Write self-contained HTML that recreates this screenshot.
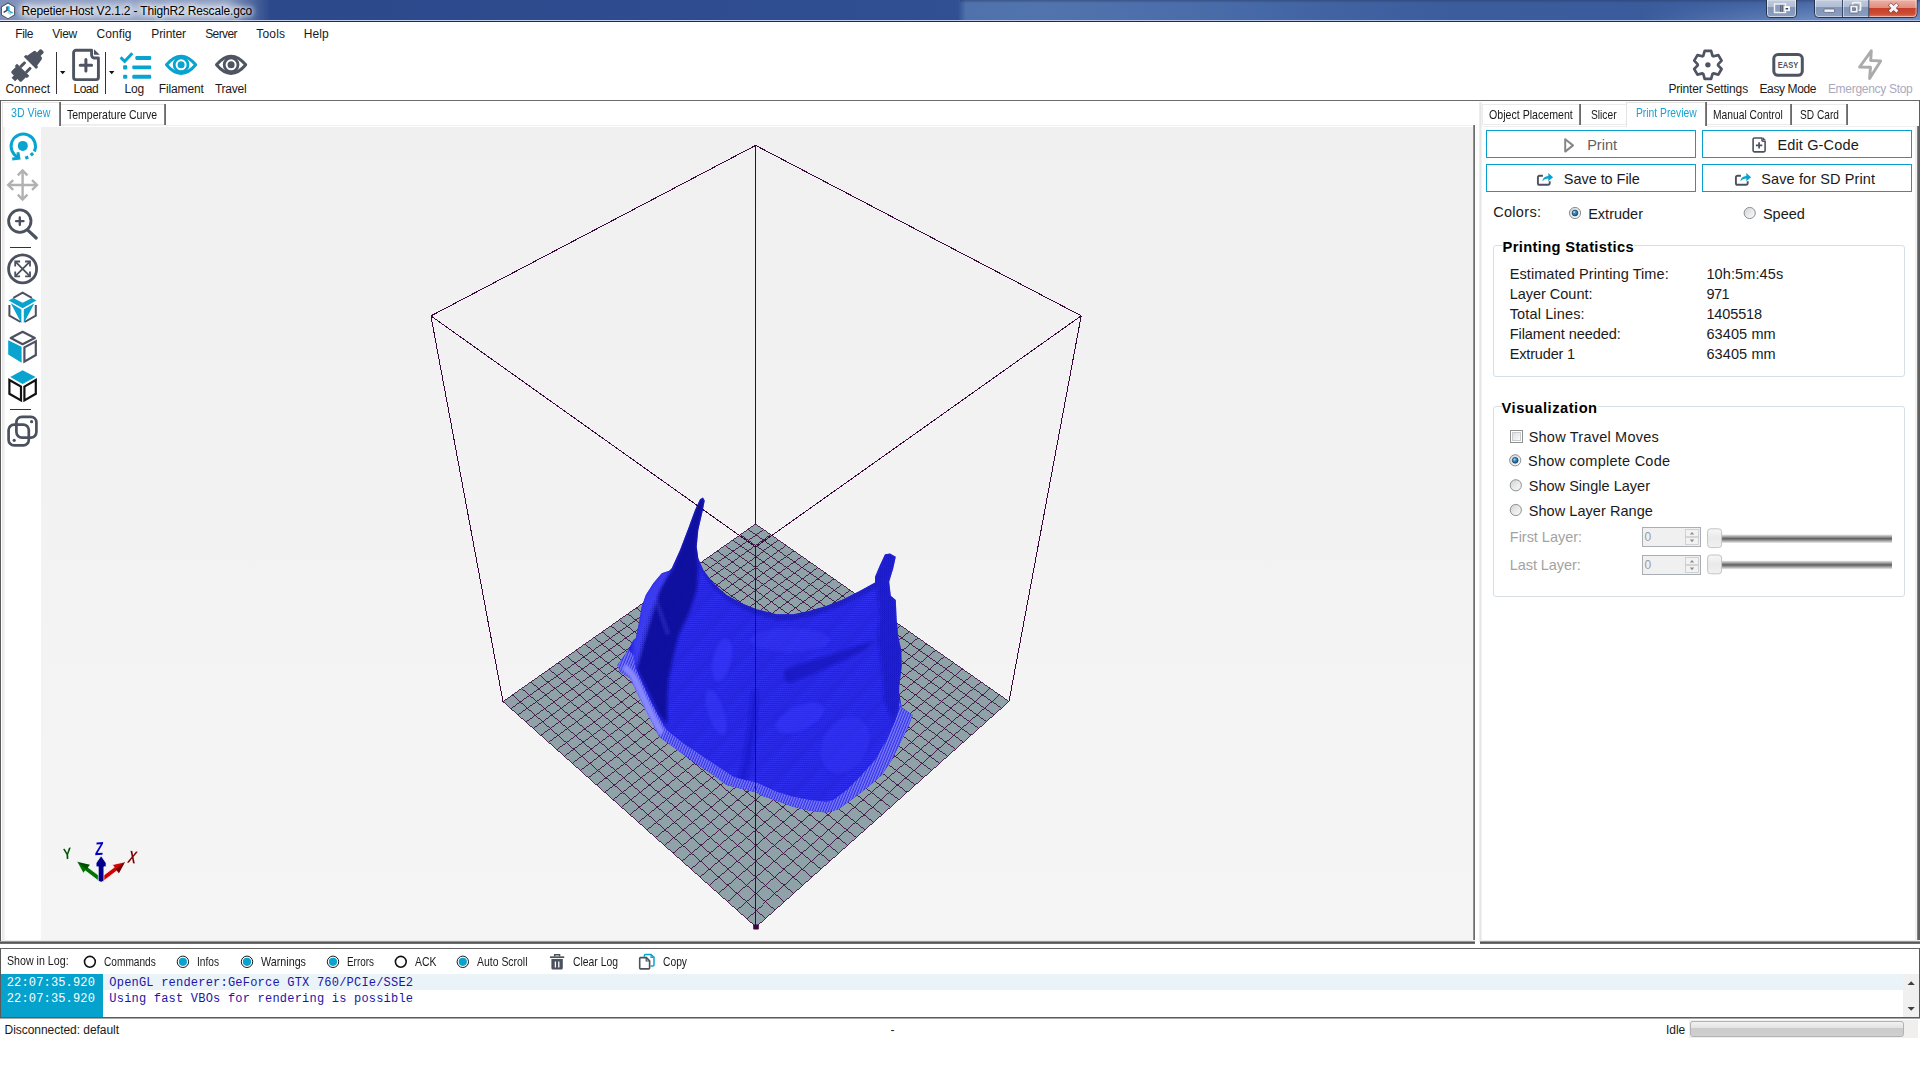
<!DOCTYPE html>
<html lang="en"><head><meta charset="utf-8"><title>Repetier-Host V2.1.2 - ThighR2 Rescale.gco</title>
<style>
html,body{margin:0;padding:0;background:#fff;}
body{width:1920px;height:1080px;overflow:hidden;font-family:"Liberation Sans",sans-serif;}
#app{position:relative;width:1920px;height:1080px;overflow:hidden;background:#fff;}
#app div,#app svg{position:absolute;box-sizing:border-box;}
.t{white-space:pre;transform-origin:0 0;}
.glow{text-shadow:0 0 4px rgba(255,255,255,.9),0 0 6px rgba(255,255,255,.85),0 0 8px rgba(255,255,255,.7),0 0 11px rgba(255,255,255,.5);}
.ln{background:#696969;}

</style></head>
<body>
<div id="app">
<!-- ===== title bar ===== -->
<div style="left:0;top:0;width:1920px;height:20px;background:linear-gradient(90deg,#2e4a8c 0,#2c498c 300px,#2e4c8f 700px,#305093 958px,#4f72ad 966px,#5174ae 1040px,#4b6eab 1180px,#4163a2 1330px,#3b5d9d 1450px,#395a9b 1760px,#4566a4 1920px);"></div>
<div style="left:960px;top:0;width:960px;height:3px;background:linear-gradient(180deg,rgba(40,60,105,.55),rgba(40,60,105,0));"></div>
<div style="left:0;top:0;width:300px;height:20px;background:linear-gradient(90deg,rgba(235,240,250,.43) 0,rgba(235,240,250,.43) 226px,rgba(235,240,250,.2) 250px,rgba(235,240,250,0) 270px);"></div>
<div style="left:20px;top:2px;width:218px;height:17px;border-radius:9px;background:rgba(255,255,255,.4);filter:blur(5px);"></div>
<div style="left:0;top:20px;width:1920px;height:1px;background:linear-gradient(90deg,#dfe6f3 0,#c3cfe8 300px,#b3c3e3 1920px);"></div>
<div style="left:0;top:21px;width:1920px;height:1px;background:#1f2b4a;"></div>
<div style="left:1640px;top:0;width:280px;height:20px;background:linear-gradient(90deg,rgba(150,180,225,0),rgba(150,180,225,.5) 60%,rgba(150,180,225,.55));-webkit-mask-image:linear-gradient(180deg,rgba(0,0,0,.15),#000);mask-image:linear-gradient(180deg,rgba(0,0,0,.15),#000);"></div>
<!-- app icon -->
<svg style="left:0;top:2px" width="17" height="18" viewBox="0 0 17 18">
<polygon points="8,1 14.6,4.9 14.6,12.9 8,16.9 1.4,12.9 1.4,4.9" fill="#fff" stroke="#4a5468" stroke-width="1.1" stroke-linejoin="round"/>
<path d="M8.6,4.2 V9" stroke="#23b5dd" stroke-width="2" fill="none"/>
<path d="M7,4.4 V8.4 L3.6,10.4" stroke="#3c4252" stroke-width="1.5" fill="none"/>
<path d="M8.6,9 L12.6,11" stroke="#23b5dd" stroke-width="1.7" fill="none"/>
<path d="M7.6,10.4 L11.2,12.4" stroke="#c9c9c9" stroke-width="1.6" fill="none"/>
</svg>
<!-- caption buttons -->
<svg style="left:1760px;top:0" width="160" height="22" viewBox="0 0 160 22">
<defs>
<linearGradient id="gb" x1="0" y1="0" x2="0" y2="1"><stop offset="0" stop-color="#c3cde0"/><stop offset=".45" stop-color="#aebbd3"/><stop offset=".46" stop-color="#8095b9"/><stop offset="1" stop-color="#8d9fc0"/></linearGradient>
<linearGradient id="gr" x1="0" y1="0" x2="0" y2="1"><stop offset="0" stop-color="#eeb0a4"/><stop offset=".45" stop-color="#e08f80"/><stop offset=".46" stop-color="#c2402a"/><stop offset=".8" stop-color="#cf4a30"/><stop offset="1" stop-color="#d9765e"/></linearGradient>
</defs>
<!-- extra -->
<path d="M6.5,-1 H36.5 V14 a3.5,3.5 0 0 1 -3.5,3.5 H10 a3.5,3.5 0 0 1 -3.5,-3.5 Z" fill="url(#gb)" stroke="#26344f" stroke-width="1"/>
<path d="M7.5,0 H35.5 V14 a2.5,2.5 0 0 1 -2.5,2.5 H10 a2.5,2.5 0 0 1 -2.5,-2.5 Z" fill="none" stroke="rgba(255,255,255,.55)" stroke-width="1"/>
<rect x="14.5" y="4" width="11" height="8.5" fill="#8b9dbf" stroke="#f4f4f4" stroke-width="1.4"/>
<path d="M20.7,5 V12 M22.3,5 V12" stroke="#444c60" stroke-width=".8"/>
<rect x="24.3" y="6.6" width="5.2" height="4" fill="#fff" stroke="#f4f4f4" stroke-width="1"/>
<rect x="25.6" y="8" width="2.6" height="1.5" fill="#3a4358"/>
<!-- min max close -->
<path d="M54.5,-1 H157 V13.5 a4,4 0 0 1 -4,4 H58.5 a4,4 0 0 1 -4,-4 Z" fill="url(#gb)" stroke="#26344f" stroke-width="1"/>
<path d="M109,0 H156.5 V13.5 a3.5,3.5 0 0 1 -3.5,3.5 H109 Z" fill="url(#gr)"/>
<path d="M55.5,0 H156 V13.5 a3,3 0 0 1 -3,3 H58.5 a3,3 0 0 1 -3,-3 Z" fill="none" stroke="rgba(255,255,255,.5)" stroke-width="1"/>
<path d="M82.5,0 V17 M108.8,0 V17" stroke="#3a4866" stroke-width="1"/>
<path d="M83.5,0 V16.5" stroke="rgba(255,255,255,.45)" stroke-width="1"/>
<rect x="64" y="9" width="10.5" height="3.4" rx=".6" fill="#f4f4f4" stroke="#596581" stroke-width=".8"/>
<rect x="92.6" y="2.6" width="8" height="7.6" rx=".8" fill="#a9b6cf" stroke="#f4f4f4" stroke-width="1.6"/>
<rect x="89.9" y="5.2" width="8.2" height="7.8" rx=".8" fill="#f4f4f4" stroke="#4d5974" stroke-width=".7"/>
<rect x="92.6" y="7.8" width="3" height="2.7" fill="#7c8fb3" stroke="#4d5974" stroke-width=".6"/>
<path d="M129.4,4 L137.8,12 M137.8,4 L129.4,12" stroke="#6a3434" stroke-width="4.4" stroke-linecap="butt" opacity=".75"/>
<path d="M129.8,4.4 L137.4,11.6 M137.4,4.4 L129.8,11.6" stroke="#f6f6f6" stroke-width="2.9" stroke-linecap="butt"/>
</svg>

<!-- ===== toolbar ===== -->
<div class="ln" style="left:0;top:100px;width:1920px;height:1px;background:#6b6b6b;"></div>
<svg style="left:0;top:44px" width="260" height="56" viewBox="0 44 260 56">
<!-- connect -->
<g transform="translate(28.3,64.6) rotate(-45) scale(.9)" fill="#4f5463">
<path d="M-23.5,-2.8 h3.6 v-3.4 q0,-1.8 1.8,-1.8 h6.4 v-1.6 h3.6 v19.2 h-3.6 v-1.6 h-6.4 q-1.8,0 -1.8,-1.8 v-3.4 h-3.6 Z"/>
<rect x="-8.4" y="-6" width="8.2" height="3.3" rx="1.2"/><rect x="-8.4" y="2.7" width="8.2" height="3.3" rx="1.2"/>
<path d="M2.6,-9.6 h3.4 v1.8 l8.6,1.4 q1.8,.4 1.8,2.2 v1.4 h4.4 q1.4,0 1.4,1.4 v2.8 q0,1.4 -1.4,1.4 h-4.4 v1.4 q0,1.8 -1.8,2.2 l-8.6,1.4 v1.8 h-3.4 Z"/>
</g>
<rect x="56" y="52" width="1" height="42" fill="#333"/>
<path d="M60,71 h5.4 l-2.7,3.2 Z" fill="#111"/>
<!-- load -->
<path d="M91.6,50.3 H76 a2.4,2.4 0 0 0 -2.4,2.4 V77.2 a2.4,2.4 0 0 0 2.4,2.4 H96 a2.4,2.4 0 0 0 2.4,-2.4 V58 H94.6 a3,3 0 0 1 -3,-3 Z" fill="none" stroke="#4f5463" stroke-width="2.9" stroke-linejoin="round"/>
<path d="M94,49.2 L99.8,54.8 H94 Z" fill="#4f5463"/>
<path d="M80.2,65.2 H91.6 M85.9,59.4 V71" stroke="#4f5463" stroke-width="3" stroke-linecap="round" fill="none"/>
<rect x="105" y="52" width="1" height="42" fill="#333"/>
<path d="M109,71 h5.4 l-2.7,3.2 Z" fill="#111"/>
<!-- log -->
<path d="M120.6,57.4 L124.7,61.3 L132.3,53.3" fill="none" stroke="#08a4cf" stroke-width="3"/>
<rect x="135.4" y="56" width="15.8" height="3.9" rx="1.2" fill="#08a4cf"/>
<rect x="132.3" y="65.4" width="18.9" height="3.9" rx="1.2" fill="#08a4cf"/>
<rect x="132.3" y="74.8" width="18.9" height="3.9" rx="1.2" fill="#08a4cf"/>
<rect x="123.1" y="65.3" width="4.2" height="4.1" rx="1.2" fill="#08a4cf"/>
<rect x="123.1" y="74.7" width="4.2" height="4.1" rx="1.2" fill="#08a4cf"/>
<!-- filament eye -->
<g transform="translate(181.1,64.8)">
<path d="M-14.6,0 Q-7.5,-8.6 0,-8.6 Q7.5,-8.6 14.6,0 Q7.5,8.6 0,8.6 Q-7.5,8.6 -14.6,0 Z" fill="#fff" stroke="#08a4cf" stroke-width="3" stroke-linejoin="round"/>
<circle r="6.9" fill="#fff" stroke="#08a4cf" stroke-width="2.8"/>
<circle r="3.5" fill="#08a4cf"/>
</g>
<!-- travel eye -->
<g transform="translate(231.1,64.8)">
<path d="M-14.6,0 Q-7.5,-8.6 0,-8.6 Q7.5,-8.6 14.6,0 Q7.5,8.6 0,8.6 Q-7.5,8.6 -14.6,0 Z" fill="#fff" stroke="#4f5463" stroke-width="3" stroke-linejoin="round"/>
<circle r="6.9" fill="#fff" stroke="#4f5463" stroke-width="2.8"/>
<circle r="3.5" fill="#4f5463"/>
</g>
</svg>
<svg style="left:1660px;top:44px" width="260" height="56" viewBox="0 0 260 56">
<path d="M43.27,11.76 L44.68,6.92 L51.12,6.92 L52.53,11.76 L53.46,12.30 L58.36,11.10 L61.58,16.67 L58.09,20.32 L58.09,21.38 L61.58,25.03 L58.36,30.60 L53.46,29.40 L52.53,29.94 L51.12,34.78 L44.68,34.78 L43.27,29.94 L42.34,29.40 L37.44,30.60 L34.22,25.03 L37.71,21.38 L37.71,20.32 L34.22,16.67 L37.44,11.10 L42.34,12.30 Z" fill="none" stroke="#4f5463" stroke-width="2.7" stroke-linejoin="round"/>
<circle cx="47.9" cy="20.85" r="2.7" fill="#4f5463"/>
<rect x="113.8" y="10.6" width="28.5" height="20.7" rx="4.2" fill="#fff" stroke="#4f5463" stroke-width="3"/>
<text x="128.05" y="23.9" font-family="Liberation Sans, sans-serif" font-weight="bold" font-size="8.3" fill="#4f5463" text-anchor="middle" textLength="20.4" lengthAdjust="spacingAndGlyphs">EASY</text>
<path d="M211.3,6.8 L199.6,23 L210.5,23.3 L209.6,34.6 L220.7,16.9 L210.7,16.5 Z" fill="none" stroke="#ababab" stroke-width="2.9" stroke-linejoin="round"/>
</svg>

<!-- ===== left panel frame, tabs ===== -->
<div style="left:0;top:100px;width:1px;height:843px;background:#5a5a5a;"></div>
<div style="left:2px;top:127px;width:3px;height:813px;background:linear-gradient(90deg,#e6e6e6,#f6f6f6);"></div>
<!-- tab 3D View -->
<div style="left:2px;top:102px;width:59px;height:25px;background:#fff;border-left:1px solid #e3e3e3;border-top:1px solid #e3e3e3;"></div>
<div style="left:59px;top:102px;width:2px;height:24px;background:linear-gradient(90deg,#8a8a8a,#606060);"></div>
<!-- tab Temperature Curve -->
<div style="left:61px;top:104px;width:104px;height:21px;background:#fff;border-top:1px solid #e6e6e6;border-bottom:1px solid #ececec;"></div>
<div style="left:164px;top:104px;width:2px;height:21px;background:linear-gradient(90deg,#8a8a8a,#606060);"></div>
<div style="left:61px;top:125px;width:1412px;height:1px;background:#f1f1f1;"></div>
<!-- 3D view frame -->
<div style="left:1473px;top:125px;width:2px;height:818px;background:linear-gradient(90deg,#a0a0a0,#5c5c5c);"></div>
<div style="left:1px;top:940px;width:1474px;height:1px;background:#ececec;"></div>
<div style="left:0;top:941px;width:1475px;height:1px;background:#9a9a9a;"></div>
<div style="left:0;top:942px;width:1475px;height:1px;background:#565656;"></div>
<div style="left:0;top:943px;width:1475px;height:1px;background:#6e6e6e;"></div>
<!-- left tool icons -->
<svg style="left:0;top:127px" width="41" height="330" viewBox="0 127 41 330">
<!-- rotate -->
<path d="M34.3,151.5 A12.2,12.2 0 1 0 18.8,157.6" fill="none" stroke="#08a4cf" stroke-width="3"/>
<path d="M17.9,152.2 L18.9,158.2 L12.2,158.9" fill="none" stroke="#08a4cf" stroke-width="3" stroke-linejoin="miter"/>
<circle cx="22.8" cy="145.9" r="5" fill="#08a4cf"/>
<rect x="-1.6" y="-1.6" width="3.2" height="3.2" fill="#08a4cf" transform="translate(26.8,157.6) rotate(-20)"/>
<rect x="-1.6" y="-1.6" width="3.2" height="3.2" fill="#08a4cf" transform="translate(31.9,154.2) rotate(-40)"/>
<!-- move -->
<g fill="none" stroke="#b1b1b1" stroke-width="2.4">
<path d="M22.6,170.6 V199.4 M8.6,185 H36.6"/>
<path d="M17.8,175.4 L22.6,170.4 L27.4,175.4 M17.8,194.6 L22.6,199.6 L27.4,194.6 M13.2,180.2 L8.2,185 L13.2,189.8 M32,180.2 L37,185 L32,189.8"/>
</g>
<!-- zoom -->
<circle cx="19.8" cy="221.1" r="11.2" fill="none" stroke="#4c515f" stroke-width="2.8"/>
<path d="M27.8,230.2 L36.2,238" stroke="#4c515f" stroke-width="3.2" stroke-linecap="round"/>
<path d="M16.1,221.1 H23.5 M19.8,217.4 V224.8" stroke="#4c515f" stroke-width="2.4" stroke-linecap="round"/>
<rect x="10" y="247" width="21" height="1" fill="#333"/>
<!-- fit -->
<circle cx="22.6" cy="268.9" r="14" fill="none" stroke="#4c515f" stroke-width="2.8"/>
<g fill="none" stroke="#4c515f" stroke-width="1.8">
<path d="M15.6,261.9 L29.6,275.9 M29.6,261.9 L15.6,275.9"/>
<path d="M15.2,266.4 V261.5 H20.1 M25.1,261.5 H30 V266.4 M30,271.4 V276.3 H25.1 M20.1,276.3 H15.2 V271.4"/>
</g>
<!-- cube iso -->
<path d="M8.6,300.6 L13.2,298 L22.6,302.8 L32,298 L36.4,300.6 L22.6,308.2 Z" fill="#08a4cf"/>
<path d="M10.8,303.2 L21.4,309.4 V323.2 Z M34.4,303.2 L23.8,309.4 V323.2 Z" fill="#08a4cf"/>
<path d="M13.4,297.8 L22.6,292.6 L31.8,297.8" fill="none" stroke="#4c515f" stroke-width="2"/>
<path d="M9.4,305 V315.6 L20.6,322 M35.8,305 V315.6 L24.6,322" fill="none" stroke="#4c515f" stroke-width="2"/>
<!-- cube left -->
<path d="M22.6,331.8 L34.8,338 L22.6,344.2 L10.8,338 Z" fill="none" stroke="#4c515f" stroke-width="2.3" stroke-linejoin="round"/>
<path d="M8.2,340.2 L21.6,346.8 V362.8 L8.2,354.6 Z" fill="#08a4cf"/>
<path d="M24.4,347.4 L35.8,341.4 V355 L24.4,361.6 Z" fill="none" stroke="#4c515f" stroke-width="2.2"/>
<!-- cube top -->
<path d="M22.6,370.2 L35.6,377 L22.6,384 L10.2,377 Z" fill="#08a4cf"/>
<path d="M9.4,380 L21,386.6 V400.4 L9.4,393.8 Z M24.4,386.6 L35.8,380 V393.8 L24.4,400.4 Z" fill="none" stroke="#111" stroke-width="2.2"/>
<rect x="10" y="409" width="21" height="1" fill="#333"/>
<!-- overlapping squares -->
<rect x="16.4" y="416.8" width="20" height="20.8" rx="5.5" fill="none" stroke="#4c515f" stroke-width="2.7"/>
<rect x="8.6" y="424.6" width="20.2" height="20.8" rx="5.5" fill="none" stroke="#4c515f" stroke-width="2.7"/>
<circle cx="31.6" cy="421.7" r="1.6" fill="#4c515f"/><circle cx="14.2" cy="440.3" r="1.6" fill="#4c515f"/>
</svg>

<!-- ===== 3D view ===== -->
<svg style="left:41px;top:127px" width="1432" height="813" viewBox="41 127 1432 813">
<defs>
<linearGradient id="bg3d" x1="0" y1="0" x2="0" y2="1"><stop offset="0" stop-color="#f0f0f0"/><stop offset="1" stop-color="#f5f5f5"/></linearGradient>
<pattern id="moire" width="2" height="2" patternUnits="userSpaceOnUse"><rect width="2" height="1" fill="#4a4aff" opacity=".6"/></pattern>
<pattern id="moire2" width="2.13" height="2.13" patternUnits="userSpaceOnUse" patternTransform="rotate(4)"><rect width="2.13" height="1.06" fill="#1010c0" opacity=".6"/></pattern>
<pattern id="moire3" width="2.2" height="2.2" patternUnits="userSpaceOnUse" patternTransform="rotate(-77)"><rect width="2.2" height="1.1" fill="#4646ff" opacity=".5"/></pattern>
<pattern id="stripes" width="2.5" height="2.5" patternUnits="userSpaceOnUse" patternTransform="rotate(22)"><rect width="1.25" height="2.5" fill="#9494ff"/></pattern>
<pattern id="dots" width="2" height="2" patternUnits="userSpaceOnUse"><rect width="1" height="1" fill="#0a0a9a" opacity=".55"/></pattern>
<radialGradient id="shade" cx=".55" cy=".45" r=".6"><stop offset="0" stop-color="#2a2aff" stop-opacity=".5"/><stop offset="1" stop-color="#1414c8" stop-opacity=".25"/></radialGradient>
<filter id="b2" x="-20%" y="-20%" width="140%" height="140%"><feGaussianBlur stdDeviation="1.6"/></filter>
<filter id="b1" x="-20%" y="-20%" width="140%" height="140%"><feGaussianBlur stdDeviation=".9"/></filter>
</defs>
<rect x="41" y="127" width="1432" height="813" fill="url(#bg3d)"/>
<path d="M755.6,145.4L430.9,315.9 M755.6,145.4L1081.2,315.8 M430.9,315.9L503.0,701.6 M1081.2,315.8L1009.0,701.5 M755.6,145.4L755.56,524.0" stroke="#3a073c" stroke-width="1" fill="none" shape-rendering="crispEdges"/>
<polygon points="755.6,524.0 1009.0,701.5 756.0,927.0 503.0,701.6" fill="#8fa2a8"/>
<path d="M755.6,524.0L503.0,701.6 M755.6,524.0L1009.0,701.5 M763.1,529.3L510.5,708.2 M748.0,529.3L1001.5,708.2 M770.8,534.6L518.0,714.9 M740.4,534.7L994.0,714.9 M778.4,540.0L525.5,721.7 M732.7,540.1L986.4,721.6 M786.2,545.4L533.2,728.5 M725.0,545.5L978.8,728.4 M794.0,550.9L540.9,735.3 M717.2,551.0L971.1,735.3 M801.8,556.4L548.6,742.3 M709.4,556.5L963.3,742.2 M809.7,561.9L556.5,749.2 M701.5,562.0L955.5,749.2 M817.7,567.5L564.3,756.3 M693.6,567.6L947.6,756.3 M825.7,573.1L572.3,763.3 M685.6,573.2L939.6,763.4 M833.8,578.8L580.3,770.5 M677.5,578.9L931.6,770.5 M841.9,584.5L588.4,777.7 M669.4,584.6L923.5,777.7 M850.1,590.2L596.6,785.0 M661.2,590.4L915.3,785.0 M858.4,596.0L604.8,792.3 M653.0,596.1L907.1,792.3 M866.7,601.9L613.1,799.7 M644.7,602.0L898.8,799.7 M875.1,607.7L621.4,807.1 M636.3,607.9L890.4,807.2 M883.6,613.6L629.9,814.6 M627.9,613.8L882.0,814.7 M892.1,619.6L638.4,822.2 M619.4,619.8L873.5,822.3 M900.7,625.6L647.0,829.9 M610.8,625.8L864.9,829.9 M909.3,631.7L655.6,837.6 M602.2,631.8L856.3,837.6 M918.0,637.8L664.4,845.4 M593.5,637.9L847.5,845.4 M926.8,643.9L673.2,853.2 M584.8,644.1L838.7,853.3 M935.7,650.1L682.0,861.1 M576.0,650.3L829.9,861.2 M944.6,656.4L691.0,869.1 M567.1,656.5L820.9,869.1 M953.6,662.7L700.0,877.1 M558.2,662.8L811.9,877.2 M962.6,669.0L709.2,885.3 M549.1,669.2L802.8,885.3 M971.8,675.4L718.4,893.5 M540.1,675.5L793.6,893.5 M981.0,681.9L727.6,901.7 M530.9,682.0L784.3,901.8 M990.2,688.4L737.0,910.1 M521.7,688.5L775.0,910.1 M999.6,694.9L746.5,918.5 M512.4,695.0L765.5,918.5 M1009.0,701.5L756.0,927.0 M503.0,701.6L756.0,927.0" stroke="#3a073c" stroke-width=".84" fill="none" shape-rendering="crispEdges"/>
<!-- printed object -->
<clipPath id="mclip"><polygon points="703.0,497.5 704.7,500.8 702.5,511.7 698.3,530.0 696.7,546.7 698.3,558.3 703.3,570.0 713.3,583.3 726.7,595.0 741.7,603.3 756.7,609.2 776.7,614.2 793.3,614.2 810.0,610.8 826.7,605.8 843.3,599.2 860.0,590.8 875.0,582.5 875.0,576.7 880.0,565.0 885.0,554.2 890.0,553.6 895.8,556.7 893.3,568.3 889.2,581.7 890.8,595.8 895.8,600.0 896.7,620.0 898.3,636.7 901.3,650.0 901.7,666.7 899.2,686.7 899.2,693.3 901.7,707.5 912.5,715.0 908.3,726.7 900.0,743.3 891.7,760.0 881.7,775.0 868.3,786.7 853.3,798.3 838.3,809.2 826.7,812.5 810.0,810.8 793.3,806.7 776.7,800.8 760.0,795.0 756.7,792.5 743.3,789.2 726.7,785.0 713.3,775.0 693.3,761.7 675.0,748.3 659.2,736.7 655.0,728.3 646.7,711.7 638.3,695.0 630.0,678.3 620.0,671.7 617.5,665.0 628.3,650.0 633.3,640.0 635.8,638.3 639.2,621.7 641.7,606.7 645.8,595.0 653.3,583.3 661.7,573.3 669.2,570.8 671.7,568.3 680.0,550.0 688.3,528.3 695.0,510.0 700.0,499.2"/></clipPath>
<g>
<polygon points="703.0,497.5 704.7,500.8 702.5,511.7 698.3,530.0 696.7,546.7 698.3,558.3 703.3,570.0 713.3,583.3 726.7,595.0 741.7,603.3 756.7,609.2 776.7,614.2 793.3,614.2 810.0,610.8 826.7,605.8 843.3,599.2 860.0,590.8 875.0,582.5 875.0,576.7 880.0,565.0 885.0,554.2 890.0,553.6 895.8,556.7 893.3,568.3 889.2,581.7 890.8,595.8 895.8,600.0 896.7,620.0 898.3,636.7 901.3,650.0 901.7,666.7 899.2,686.7 899.2,693.3 901.7,707.5 912.5,715.0 908.3,726.7 900.0,743.3 891.7,760.0 881.7,775.0 868.3,786.7 853.3,798.3 838.3,809.2 826.7,812.5 810.0,810.8 793.3,806.7 776.7,800.8 760.0,795.0 756.7,792.5 743.3,789.2 726.7,785.0 713.3,775.0 693.3,761.7 675.0,748.3 659.2,736.7 655.0,728.3 646.7,711.7 638.3,695.0 630.0,678.3 620.0,671.7 617.5,665.0 628.3,650.0 633.3,640.0 635.8,638.3 639.2,621.7 641.7,606.7 645.8,595.0 653.3,583.3 661.7,573.3 669.2,570.8 671.7,568.3 680.0,550.0 688.3,528.3 695.0,510.0 700.0,499.2" fill="#2222e6"/>
<g clip-path="url(#mclip)">
<polygon points="703.0,497.5 704.7,500.8 702.5,511.7 698.3,530.0 696.7,546.7 698.3,558.3 703.3,570.0 713.3,583.3 726.7,595.0 741.7,603.3 756.7,609.2 776.7,614.2 793.3,614.2 810.0,610.8 826.7,605.8 843.3,599.2 860.0,590.8 875.0,582.5 875.0,576.7 880.0,565.0 885.0,554.2 890.0,553.6 895.8,556.7 893.3,568.3 889.2,581.7 890.8,595.8 895.8,600.0 896.7,620.0 898.3,636.7 901.3,650.0 901.7,666.7 899.2,686.7 899.2,693.3 901.7,707.5 912.5,715.0 908.3,726.7 900.0,743.3 891.7,760.0 881.7,775.0 868.3,786.7 853.3,798.3 838.3,809.2 826.7,812.5 810.0,810.8 793.3,806.7 776.7,800.8 760.0,795.0 756.7,792.5 743.3,789.2 726.7,785.0 713.3,775.0 693.3,761.7 675.0,748.3 659.2,736.7 655.0,728.3 646.7,711.7 638.3,695.0 630.0,678.3 620.0,671.7 617.5,665.0 628.3,650.0 633.3,640.0 635.8,638.3 639.2,621.7 641.7,606.7 645.8,595.0 653.3,583.3 661.7,573.3 669.2,570.8 671.7,568.3 680.0,550.0 688.3,528.3 695.0,510.0 700.0,499.2" fill="url(#moire)" opacity=".5"/>
<polygon points="703.0,497.5 704.7,500.8 702.5,511.7 698.3,530.0 696.7,546.7 698.3,558.3 703.3,570.0 713.3,583.3 726.7,595.0 741.7,603.3 756.7,609.2 776.7,614.2 793.3,614.2 810.0,610.8 826.7,605.8 843.3,599.2 860.0,590.8 875.0,582.5 875.0,576.7 880.0,565.0 885.0,554.2 890.0,553.6 895.8,556.7 893.3,568.3 889.2,581.7 890.8,595.8 895.8,600.0 896.7,620.0 898.3,636.7 901.3,650.0 901.7,666.7 899.2,686.7 899.2,693.3 901.7,707.5 912.5,715.0 908.3,726.7 900.0,743.3 891.7,760.0 881.7,775.0 868.3,786.7 853.3,798.3 838.3,809.2 826.7,812.5 810.0,810.8 793.3,806.7 776.7,800.8 760.0,795.0 756.7,792.5 743.3,789.2 726.7,785.0 713.3,775.0 693.3,761.7 675.0,748.3 659.2,736.7 655.0,728.3 646.7,711.7 638.3,695.0 630.0,678.3 620.0,671.7 617.5,665.0 628.3,650.0 633.3,640.0 635.8,638.3 639.2,621.7 641.7,606.7 645.8,595.0 653.3,583.3 661.7,573.3 669.2,570.8 671.7,568.3 680.0,550.0 688.3,528.3 695.0,510.0 700.0,499.2" fill="url(#moire2)" opacity=".5"/>
<polygon points="703.0,497.5 704.7,500.8 702.5,511.7 698.3,530.0 696.7,546.7 698.3,558.3 703.3,570.0 713.3,583.3 726.7,595.0 741.7,603.3 756.7,609.2 776.7,614.2 793.3,614.2 810.0,610.8 826.7,605.8 843.3,599.2 860.0,590.8 875.0,582.5 875.0,576.7 880.0,565.0 885.0,554.2 890.0,553.6 895.8,556.7 893.3,568.3 889.2,581.7 890.8,595.8 895.8,600.0 896.7,620.0 898.3,636.7 901.3,650.0 901.7,666.7 899.2,686.7 899.2,693.3 901.7,707.5 912.5,715.0 908.3,726.7 900.0,743.3 891.7,760.0 881.7,775.0 868.3,786.7 853.3,798.3 838.3,809.2 826.7,812.5 810.0,810.8 793.3,806.7 776.7,800.8 760.0,795.0 756.7,792.5 743.3,789.2 726.7,785.0 713.3,775.0 693.3,761.7 675.0,748.3 659.2,736.7 655.0,728.3 646.7,711.7 638.3,695.0 630.0,678.3 620.0,671.7 617.5,665.0 628.3,650.0 633.3,640.0 635.8,638.3 639.2,621.7 641.7,606.7 645.8,595.0 653.3,583.3 661.7,573.3 669.2,570.8 671.7,568.3 680.0,550.0 688.3,528.3 695.0,510.0 700.0,499.2" fill="url(#moire3)" opacity=".3"/>
<g filter="url(#b2)">
<polygon points="673.0,569.0 680.0,550.0 688.3,528.3 695.0,510.0 700.0,499.2 703.0,497.5 704.7,500.8 702.5,511.7 698.3,530.0 696.7,546.7 698.1,568.9 696.7,589.6 689.3,611.9 678.9,634.1 673.0,656.3 668.5,678.5 667.0,700.7 667.0,724.0 659.6,715.6 649.3,693.3 638.9,672.6 636.7,663.7 641.9,634.0 652.2,604.4 659.6,589.6" fill="#12129a" opacity=".92"/>
<polygon points="875.0,582.5 875.0,576.7 880.0,565.0 885.0,554.2 890.0,553.6 895.8,556.7 893.3,568.3 889.2,581.7 890.8,595.8 895.8,600.0 896.7,620.0 898.3,636.7 901.3,650.0 901.7,666.7 899.2,686.7 899.2,708.0 893.0,722.0 884.0,700.0 882.0,670.0 878.0,640.0 880.0,610.0" fill="#1c1cd0" opacity=".5"/>
<polygon points="633.3,640.0 635.8,638.3 639.2,621.7 641.7,606.7 645.8,595.0 653.3,583.3 661.7,573.3 669.2,570.8 660.0,590.0 652.0,615.0 643.0,645.0 637.0,668.0 633.5,655.0" fill="#3a3af0"/>
<path d="M655,597 L668,634" stroke="#4a4aee" stroke-width="3" opacity=".4"/>
<polygon points="752.0,690.0 748.0,730.0 742.0,765.0 738.0,780.0 746.0,781.0 752.0,760.0 757.0,720.0 758.0,690.0" fill="#1a1ac8" opacity=".55"/>
<ellipse cx="722" cy="660" rx="9" ry="22" fill="#3a3aff" opacity=".55" transform="rotate(12 722 660)"/>
<ellipse cx="800" cy="718" rx="26" ry="12" fill="#3a3aff" opacity=".45" transform="rotate(-25 800 718)"/>
<ellipse cx="716" cy="712" rx="8" ry="24" fill="#3c3cff" opacity=".4" transform="rotate(-18 716 712)"/>
<ellipse cx="845" cy="745" rx="22" ry="30" fill="#3636fa" opacity=".4" transform="rotate(30 845 745)"/>
<ellipse cx="790" cy="640" rx="40" ry="12" fill="#3838fc" opacity=".35"/>
</g>
<g filter="url(#b1)">
<polygon points="785.0,670.0 800.0,664.0 830.0,655.0 856.0,646.0 874.0,641.0 866.0,649.0 845.0,660.0 815.0,673.0 790.0,683.0 784.0,680.0" fill="#1616b4" opacity=".6"/>
<polygon points="696.7,546.7 698.3,558.3 703.3,570.0 713.3,583.3 726.7,595.0 741.7,603.3 756.7,609.2 776.7,614.2 793.3,614.2 810.0,610.8 826.7,605.8 843.3,599.2 860.0,590.8 875.0,582.5 874.5,588.0 859.5,596.3 842.8,604.7 826.2,611.3 809.5,616.3 792.8,619.7 776.2,619.7 758.2,614.7 743.2,608.8 728.2,600.5 714.8,588.8 704.8,575.5 699.8,563.8 698.2,552.2" fill="#1a1ac4" opacity=".7"/>
</g>
<polygon points="673.0,569.0 680.0,550.0 688.3,528.3 695.0,510.0 700.0,499.2 703.0,497.5 704.7,500.8 702.5,511.7 698.3,530.0 696.7,546.7 698.1,568.9 696.7,589.6 689.3,611.9 678.9,634.1 673.0,656.3 668.5,678.5 667.0,700.7 667.0,724.0 659.6,715.6 649.3,693.3 638.9,672.6 636.7,663.7 641.9,634.0 652.2,604.4 659.6,589.6" fill="url(#dots)" opacity=".7"/>
<polygon points="875.0,582.5 875.0,576.7 880.0,565.0 885.0,554.2 890.0,553.6 895.8,556.7 893.3,568.3 889.2,581.7 890.8,595.8 895.8,600.0 896.7,620.0 898.3,636.7 901.3,650.0 901.7,666.7 899.2,686.7 899.2,708.0 893.0,722.0 884.0,700.0 882.0,670.0 878.0,640.0 880.0,610.0" fill="url(#dots)" opacity=".55"/>
<polygon points="696.7,546.7 698.3,558.3 703.3,570.0 713.3,583.3 726.7,595.0 741.7,603.3 756.7,609.2 776.7,614.2 793.3,614.2 810.0,610.8 826.7,605.8 843.3,599.2 860.0,590.8 875.0,582.5 874.5,588.0 859.5,596.3 842.8,604.7 826.2,611.3 809.5,616.3 792.8,619.7 776.2,619.7 758.2,614.7 743.2,608.8 728.2,600.5 714.8,588.8 704.8,575.5 699.8,563.8 698.2,552.2" fill="url(#dots)" opacity=".6"/>
</g>
<polygon points="901.7,707.5 912.5,715.0 908.3,726.7 900.0,743.3 891.7,760.0 881.7,775.0 868.3,786.7 853.3,798.3 838.3,809.2 826.7,812.5 810.0,810.8 793.3,806.7 776.7,800.8 760.0,795.0 756.7,792.5 743.3,789.2 726.7,785.0 713.3,775.0 693.3,761.7 675.0,748.3 659.2,736.7 655.0,728.3 646.7,711.7 638.3,695.0 630.0,678.3 620.0,671.7 617.5,665.0 628.3,650.0 633.5,655.0 635.8,668.3 641.7,681.7 651.7,703.3 663.3,725.0 666.7,730.0 683.3,743.3 703.3,756.7 723.3,770.0 733.3,776.7 745.0,780.0 756.7,782.5 776.7,791.7 793.3,796.7 810.0,800.0 826.7,801.7 833.3,800.0 846.7,790.0 860.0,776.7 875.0,760.0 886.7,740.0 895.0,721.7 899.2,708.3 899.2,700.0" fill="#3232e6"/>
<polygon points="901.7,707.5 912.5,715.0 908.3,726.7 900.0,743.3 891.7,760.0 881.7,775.0 868.3,786.7 853.3,798.3 838.3,809.2 826.7,812.5 810.0,810.8 793.3,806.7 776.7,800.8 760.0,795.0 756.7,792.5 743.3,789.2 726.7,785.0 713.3,775.0 693.3,761.7 675.0,748.3 659.2,736.7 655.0,728.3 646.7,711.7 638.3,695.0 630.0,678.3 620.0,671.7 617.5,665.0 628.3,650.0 633.5,655.0 635.8,668.3 641.7,681.7 651.7,703.3 663.3,725.0 666.7,730.0 683.3,743.3 703.3,756.7 723.3,770.0 733.3,776.7 745.0,780.0 756.7,782.5 776.7,791.7 793.3,796.7 810.0,800.0 826.7,801.7 833.3,800.0 846.7,790.0 860.0,776.7 875.0,760.0 886.7,740.0 895.0,721.7 899.2,708.3 899.2,700.0" fill="url(#stripes)" opacity=".8"/>
<polygon points="622.0,669.0 630.0,677.0 638.0,694.0 646.0,711.0 655.0,728.0 660.0,736.0 664.0,731.0 655.0,714.0 646.0,696.0 640.0,682.0 634.0,672.0 626.0,664.0" fill="#8888ff" filter="url(#b1)"/>
</g>
<path d="M755.6,547.0L756.0,927.0 M430.9,315.9L755.6,547.0 M1081.2,315.8L755.6,547.0" stroke="#3a073c" stroke-width="1" fill="none" shape-rendering="crispEdges"/>
<rect x="753.2" y="924.5" width="5.6" height="5" rx=".8" fill="#3f0340"/>
<!-- axis gizmo -->
<g>
<polygon points="101.9,877.8 87.9,867.3 89.8,864.7 77.0,861.8 83.3,873.3 85.3,870.8 99.3,881.4" fill="#007400" stroke="#fdfdfd" stroke-width=".7"/>
<polygon points="86.6,869.0 89.8,864.7 77.0,861.8" fill="#004e00"/>
<polygon points="102.9,881.4 116.9,870.8 118.9,873.3 125.2,861.8 112.4,864.7 114.3,867.3 100.3,877.8" fill="#d40000" stroke="#fdfdfd" stroke-width=".7"/>
<polygon points="115.6,869.0 118.9,873.3 125.2,861.8" fill="#740000"/>
<path d="M98.3,881 V866.8 H96.1 V863 L101.1,855.8 L106.1,863 V866.8 H103.9 V881 L101.1,882.2 Z" fill="#00008c" stroke="#fdfdfd" stroke-width=".7"/>
<text transform="translate(64.2,859.8) rotate(-12) scale(.78,1)" font-family="Liberation Sans, sans-serif" font-weight="bold" font-style="italic" font-size="15.5" fill="#005400" stroke="#fdfdfd" stroke-width=".6" paint-order="stroke">Y</text>
<text transform="translate(95.4,855.2) rotate(-4) scale(.72,1)" font-family="Liberation Sans, sans-serif" font-weight="bold" font-style="italic" font-size="18.5" fill="#0000c4" stroke="#fdfdfd" stroke-width=".6" paint-order="stroke">Z</text>
<text transform="translate(127.6,862.4) rotate(8) scale(.7,1)" font-family="Liberation Sans, sans-serif" font-weight="bold" font-style="italic" font-size="17.5" fill="#7c0000" stroke="#fdfdfd" stroke-width=".6" paint-order="stroke">X</text>
</g>
</svg>

<!-- ===== right panel ===== -->
<div style="left:1479px;top:102px;width:3px;height:840px;background:linear-gradient(90deg,#f1f1f1,#e6e6e6 50%,#f6f6f6);"></div>
<div style="left:1915px;top:126px;width:2px;height:815px;background:#f1f1f1;"></div>
<div style="left:1917px;top:126px;width:3px;height:818px;background:linear-gradient(90deg,#9a9a9a,#606060 45%,#606060);"></div>
<div style="left:1480px;top:940px;width:1437px;height:1px;background:#ececec;"></div>
<div style="left:1480px;top:941px;width:440px;height:1px;background:#9a9a9a;"></div>
<div style="left:1480px;top:942px;width:440px;height:1px;background:#565656;"></div>
<div style="left:1480px;top:943px;width:440px;height:1px;background:#6e6e6e;"></div>
<div style="left:1919px;top:100px;width:1px;height:27px;background:#5e5e5e;"></div>
<!-- tabs -->
<div style="left:1482px;top:104px;width:98px;height:21px;background:#fff;border:1px solid #ebebeb;border-right:none;"></div>
<div style="left:1579px;top:104px;width:2px;height:21px;background:linear-gradient(90deg,#8a8a8a,#606060);"></div>
<div style="left:1581px;top:104px;width:45px;height:21px;background:#fff;border-top:1px solid #ebebeb;border-bottom:1px solid #ebebeb;"></div>
<div style="left:1626px;top:102px;width:80px;height:25px;background:#fff;border-left:1px solid #e3e3e3;border-top:1px solid #e3e3e3;"></div>
<div style="left:1705px;top:102px;width:2px;height:24px;background:linear-gradient(90deg,#8a8a8a,#606060);"></div>
<div style="left:1707px;top:104px;width:84px;height:21px;background:#fff;border-top:1px solid #ebebeb;border-bottom:1px solid #ebebeb;"></div>
<div style="left:1790px;top:104px;width:2px;height:21px;background:linear-gradient(90deg,#8a8a8a,#606060);"></div>
<div style="left:1792px;top:104px;width:55px;height:21px;background:#fff;border-top:1px solid #ebebeb;border-bottom:1px solid #ebebeb;"></div>
<div style="left:1846px;top:104px;width:2px;height:21px;background:linear-gradient(90deg,#8a8a8a,#606060);"></div>
<div style="left:1482px;top:126px;width:144px;height:1px;background:#f0f0f0;"></div>
<div style="left:1707px;top:126px;width:210px;height:1px;background:#f0f0f0;"></div>
<!-- buttons -->
<div style="left:1486px;top:130px;width:210px;height:28px;border:1px solid #0a9fcf;background:#fff;"></div>
<div style="left:1702px;top:130px;width:210px;height:28px;border:1px solid #0a9fcf;background:#fff;"></div>
<div style="left:1486px;top:164px;width:210px;height:28px;border:1px solid #0a9fcf;background:#fff;"></div>
<div style="left:1702px;top:164px;width:210px;height:28px;border:1px solid #0a9fcf;background:#fff;"></div>
<!-- group boxes -->
<div style="left:1493px;top:245px;width:412px;height:132px;border:1px solid #d5dfe5;border-radius:3px;"></div>
<div style="left:1493px;top:406px;width:412px;height:191px;border:1px solid #d5dfe5;border-radius:3px;"></div>
<svg style="left:1480px;top:127px" width="436" height="480" viewBox="1480 127 436 480">
<defs>
<linearGradient id="rg" x1="0" y1="0" x2="1" y2="1"><stop offset="0" stop-color="#cfd3d6"/><stop offset=".6" stop-color="#ecedee"/><stop offset="1" stop-color="#fbfbfb"/></linearGradient>
<radialGradient id="rd" cx=".4" cy=".35" r=".7"><stop offset="0" stop-color="#4fb3e8"/><stop offset="1" stop-color="#0d4f86"/></radialGradient>
<linearGradient id="trk" x1="0" y1="0" x2="0" y2="1"><stop offset="0" stop-color="#ededed"/><stop offset=".25" stop-color="#a6a6a6"/><stop offset=".5" stop-color="#5e5e5e"/><stop offset=".75" stop-color="#a6a6a6"/><stop offset="1" stop-color="#ededed"/></linearGradient>
<linearGradient id="thumb" x1="0" y1="0" x2="0" y2="1"><stop offset="0" stop-color="#f7f7f7"/><stop offset=".5" stop-color="#e9e9e9"/><stop offset="1" stop-color="#f1f1f1"/></linearGradient>
<linearGradient id="cb" x1="0" y1="0" x2="1" y2="1"><stop offset="0" stop-color="#d9dcdf"/><stop offset="1" stop-color="#fdfdfd"/></linearGradient>
</defs>
<!-- print icon -->
<path d="M1565.2,139.2 V151.6 L1573,145.4 Z" fill="none" stroke="#868686" stroke-width="2" stroke-linejoin="round"/>
<!-- edit icon -->
<path d="M1762,138 H1754.4 a1.3,1.3 0 0 0 -1.3,1.3 V150.6 a1.3,1.3 0 0 0 1.3,1.3 H1763.8 a1.3,1.3 0 0 0 1.3,-1.3 V141.2 H1763 a1,1 0 0 1 -1,-1 Z" fill="none" stroke="#4c515f" stroke-width="1.6" stroke-linejoin="round"/>
<path d="M1763,137.2 L1766,140.2 H1763 Z" fill="#4c515f"/>
<path d="M1755.9,145.4 H1762.3 M1759.1,142.2 V148.6" stroke="#4c515f" stroke-width="1.7" fill="none"/>
<path d="M1542.9,175.79999999999998 H1539.5 a1.6,1.6 0 0 0 -1.6,1.6 V183.2 a1.6,1.6 0 0 0 1.6,1.6 H1548.1000000000001 a1.6,1.6 0 0 0 1.6,-1.6 V181.2" fill="none" stroke="#4c515f" stroke-width="1.9"/>
<path d="M1542.3000000000002,181.2 Q1543.1000000000001,176.2 1548.3000000000002,176.0 V173.0 L1553.1000000000001,177.2 L1548.3000000000002,181.2 V178.4 Q1544.9,178.2 1542.3000000000002,181.2 Z" fill="#08a4cf"/>
<path d="M1740.9,175.79999999999998 H1737.5 a1.6,1.6 0 0 0 -1.6,1.6 V183.2 a1.6,1.6 0 0 0 1.6,1.6 H1746.1000000000001 a1.6,1.6 0 0 0 1.6,-1.6 V181.2" fill="none" stroke="#4c515f" stroke-width="1.9"/>
<path d="M1740.3000000000002,181.2 Q1741.1000000000001,176.2 1746.3000000000002,176.0 V173.0 L1751.1000000000001,177.2 L1746.3000000000002,181.2 V178.4 Q1742.9,178.2 1740.3000000000002,181.2 Z" fill="#08a4cf"/>
<circle cx="1575" cy="213" r="5.6" fill="url(#rg)" stroke="#8e8f8f" stroke-width="1"/><circle cx="1575" cy="213" r="2.9" fill="url(#rd)" stroke="#193b55" stroke-width=".7"/><circle cx="1574.2" cy="212.1" r="1" fill="#9fd8f5" opacity=".9"/>
<circle cx="1749.7" cy="213" r="5.6" fill="url(#rg)" stroke="#8e8f8f" stroke-width="1"/>
<rect x="1510.5" y="430.5" width="12" height="12" fill="#fff" stroke="#8e8f8f" stroke-width="1"/>
<rect x="1512.5" y="432.5" width="8" height="8" fill="url(#cb)" stroke="#c8ccd0" stroke-width="1"/>
<circle cx="1515.2" cy="460.3" r="5.6" fill="url(#rg)" stroke="#8e8f8f" stroke-width="1"/><circle cx="1515.2" cy="460.3" r="2.9" fill="url(#rd)" stroke="#193b55" stroke-width=".7"/><circle cx="1514.4" cy="459.40000000000003" r="1" fill="#9fd8f5" opacity=".9"/>
<circle cx="1515.8" cy="485.3" r="5.6" fill="url(#rg)" stroke="#8e8f8f" stroke-width="1"/>
<circle cx="1515.8" cy="510" r="5.6" fill="url(#rg)" stroke="#8e8f8f" stroke-width="1"/>
<rect x="1642.5" y="527.5" width="58" height="19" fill="#f0f0f0" stroke="#a9adb6" stroke-width="1"/>
<rect x="1685.5" y="529.5" width="13" height="7.2" fill="#f2f2f2" stroke="#c9c9c9" stroke-width=".8"/>
<rect x="1685.5" y="537.3" width="13" height="7.2" fill="#f2f2f2" stroke="#c9c9c9" stroke-width=".8"/>
<path d="M1689.8,534.6 l2.2,-2.6 l2.2,2.6 Z M1689.8,539.6 l2.2,2.6 l2.2,-2.6 Z" fill="#8b8b8b"/>
<rect x="1642.5" y="555.5" width="58" height="19" fill="#f0f0f0" stroke="#a9adb6" stroke-width="1"/>
<rect x="1685.5" y="557.5" width="13" height="7.2" fill="#f2f2f2" stroke="#c9c9c9" stroke-width=".8"/>
<rect x="1685.5" y="565.3" width="13" height="7.2" fill="#f2f2f2" stroke="#c9c9c9" stroke-width=".8"/>
<path d="M1689.8,562.6 l2.2,-2.6 l2.2,2.6 Z M1689.8,567.6 l2.2,2.6 l2.2,-2.6 Z" fill="#8b8b8b"/>
<rect x="1721.5" y="534.4" width="170.5" height="8.6" fill="url(#trk)"/>
<rect x="1707.6" y="528.8" width="14" height="18.8" rx="3" fill="url(#thumb)" stroke="#c3c3c3" stroke-width="1"/>
<rect x="1721.5" y="560.6" width="170.5" height="8.6" fill="url(#trk)"/>
<rect x="1707.6" y="555.0" width="14" height="18.8" rx="3" fill="url(#thumb)" stroke="#c3c3c3" stroke-width="1"/>
</svg>

<!-- ===== log panel ===== -->
<div style="left:0;top:948px;width:1920px;height:1px;background:#666;"></div>
<div style="left:0;top:948px;width:1px;height:70px;background:#5a5a5a;"></div>
<div style="left:1919px;top:948px;width:1px;height:70px;background:#5a5a5a;"></div>
<div style="left:1px;top:974px;width:102px;height:43px;background:#04a2cd;"></div>
<div style="left:103px;top:974px;width:1800px;height:16px;background:#eaf3f7;"></div>
<div style="left:1903px;top:974px;width:16px;height:43px;background:#f0f0f0;"></div>
<div style="left:0;top:1017px;width:1920px;height:1px;background:#5c5c5c;"></div>
<div style="left:0;top:1018px;width:1920px;height:1px;background:#a8a8a8;"></div>
<svg style="left:0;top:949px" width="1920" height="68" viewBox="0 949 1920 68">
<circle cx="89.9" cy="961.8" r="5.4" fill="#fff" stroke="#111" stroke-width="1.6"/><circle cx="182.9" cy="961.8" r="5.7" fill="#fff" stroke="#1a1a1a" stroke-width="1"/><circle cx="182.9" cy="961.8" r="4.1" fill="#08a4cf"/><circle cx="247" cy="961.8" r="5.7" fill="#fff" stroke="#1a1a1a" stroke-width="1"/><circle cx="247" cy="961.8" r="4.1" fill="#08a4cf"/><circle cx="333" cy="961.8" r="5.7" fill="#fff" stroke="#1a1a1a" stroke-width="1"/><circle cx="333" cy="961.8" r="4.1" fill="#08a4cf"/><circle cx="400.8" cy="961.8" r="5.4" fill="#fff" stroke="#111" stroke-width="1.6"/><circle cx="462.8" cy="961.8" r="5.7" fill="#fff" stroke="#1a1a1a" stroke-width="1"/><circle cx="462.8" cy="961.8" r="4.1" fill="#08a4cf"/>
<!-- trash -->
<path d="M550,957.2 H564.2" stroke="#4c515f" stroke-width="1.7"/>
<path d="M554.6,956.6 V954.8 H559.6 V956.6" stroke="#4c515f" stroke-width="1.4" fill="none"/>
<path d="M551.4,959 H562.8 V968 a1.6,1.6 0 0 1 -1.6,1.6 H553 a1.6,1.6 0 0 1 -1.6,-1.6 Z" fill="#4c515f"/>
<path d="M555.4,961.4 V967.4 M558.8,961.4 V967.4" stroke="#fff" stroke-width="1.3"/>
<!-- copy -->
<path d="M644.4,956.8 V955.4 a1,1 0 0 1 1,-1 H651 L654,957.4 V965 a1,1 0 0 1 -1,1 H650.6" fill="none" stroke="#08a4cf" stroke-width="1.5"/>
<path d="M651,954.6 V957.4 H653.8" fill="none" stroke="#08a4cf" stroke-width="1.1"/>
<path d="M640.6,957.6 H646.4 L649.6,960.8 V968 a.9,.9 0 0 1 -.9,.9 H640.6 a.9,.9 0 0 1 -.9,-.9 V958.5 a.9,.9 0 0 1 .9,-.9 Z" fill="#fff" stroke="#4c515f" stroke-width="1.6"/>
<path d="M646.2,957.8 V961 H649.4" fill="none" stroke="#4c515f" stroke-width="1.2"/>
<!-- scroll arrows -->
<path d="M1907.6,985 L1911.2,981.2 L1914.8,985 Z" fill="#404040"/>
<path d="M1907.6,1007 L1911.2,1010.8 L1914.8,1007 Z" fill="#404040"/>
</svg>
<!-- status bar -->
<div style="left:1689px;top:1020px;width:229px;height:18px;background:#f1eeee;"></div>
<div style="left:1690px;top:1021px;width:214px;height:16px;border:1px solid #b2b2b2;border-radius:3px;background:linear-gradient(180deg,#f2f2f2 0,#e4e4e4 40%,#cbcbcb 45%,#d0d0d0 100%);"></div>

<!-- text labels -->
<div class="t glow" style="left:21.50px;top:2px;line-height:18px;font-size:12px;color:#000;letter-spacing:-0.160px;">Repetier-Host V2.1.2 - ThighR2 Rescale.gco</div>
<div class="t" style="left:15.30px;top:25px;line-height:18px;font-size:12px;color:#1a1a1a;letter-spacing:-0.386px;">File</div>
<div class="t" style="left:52.30px;top:25px;line-height:18px;font-size:12px;color:#1a1a1a;letter-spacing:-0.299px;">View</div>
<div class="t" style="left:96.60px;top:25px;line-height:18px;font-size:12px;color:#1a1a1a;letter-spacing:0.052px;">Config</div>
<div class="t" style="left:151.30px;top:25px;line-height:18px;font-size:12px;color:#1a1a1a;letter-spacing:-0.092px;">Printer</div>
<div class="t" style="left:205.20px;top:25px;line-height:18px;font-size:12px;color:#1a1a1a;letter-spacing:-0.591px;">Server</div>
<div class="t" style="left:256.30px;top:25px;line-height:18px;font-size:12px;color:#1a1a1a;letter-spacing:0.177px;">Tools</div>
<div class="t" style="left:303.80px;top:25px;line-height:18px;font-size:12px;color:#1a1a1a;letter-spacing:0.078px;">Help</div>
<div class="t" style="left:5.40px;top:80px;line-height:18px;font-size:12px;color:#1a1a1a;">Connect</div>
<div class="t" style="left:73.50px;top:80px;line-height:18px;font-size:12px;color:#1a1a1a;letter-spacing:-0.501px;">Load</div>
<div class="t" style="left:124.50px;top:80px;line-height:18px;font-size:12px;color:#1a1a1a;letter-spacing:-0.177px;">Log</div>
<div class="t" style="left:158.80px;top:80px;line-height:18px;font-size:12px;color:#1a1a1a;letter-spacing:-0.127px;">Filament</div>
<div class="t" style="left:215.00px;top:80px;line-height:18px;font-size:12px;color:#1a1a1a;letter-spacing:-0.268px;">Travel</div>
<div class="t" style="left:1668.40px;top:80px;line-height:18px;font-size:12px;color:#1a1a1a;letter-spacing:-0.153px;">Printer Settings</div>
<div class="t" style="left:1759.50px;top:80px;line-height:18px;font-size:12px;color:#1a1a1a;letter-spacing:-0.381px;">Easy Mode</div>
<div class="t" style="left:1827.90px;top:80px;line-height:18px;font-size:12px;color:#a9a9bd;letter-spacing:-0.294px;">Emergency Stop</div>
<div class="t sx" style="left:11.20px;top:104px;line-height:18px;font-size:12.2px;color:#1ba1d1;transform:scaleX(0.8722);">3D View</div>
<div class="t sx" style="left:67.00px;top:106px;line-height:18px;font-size:12.2px;color:#1a1a1a;transform:scaleX(0.8628);">Temperature Curve</div>
<div class="t sx" style="left:1488.50px;top:106px;line-height:18px;font-size:12.2px;color:#1a1a1a;transform:scaleX(0.8711);">Object Placement</div>
<div class="t sx" style="left:1591.30px;top:106px;line-height:18px;font-size:12.2px;color:#1a1a1a;transform:scaleX(0.8398);">Slicer</div>
<div class="t sx" style="left:1635.60px;top:104px;line-height:18px;font-size:12.2px;color:#1ba1d1;transform:scaleX(0.8454);">Print Preview</div>
<div class="t sx" style="left:1713.40px;top:106px;line-height:18px;font-size:12.2px;color:#1a1a1a;transform:scaleX(0.8445);">Manual Control</div>
<div class="t sx" style="left:1800.20px;top:106px;line-height:18px;font-size:12.2px;color:#1a1a1a;transform:scaleX(0.8324);">SD Card</div>
<div class="t" style="left:1587.20px;top:135px;line-height:20px;font-size:14.5px;color:#5f5f5f;letter-spacing:-0.006px;">Print</div>
<div class="t" style="left:1777.40px;top:135px;line-height:20px;font-size:14.5px;color:#1a1a1a;letter-spacing:0.155px;">Edit G-Code</div>
<div class="t" style="left:1563.80px;top:169px;line-height:20px;font-size:14.5px;color:#1a1a1a;letter-spacing:-0.048px;">Save to File</div>
<div class="t" style="left:1761.30px;top:169px;line-height:20px;font-size:14.5px;color:#1a1a1a;letter-spacing:0.105px;">Save for SD Print</div>
<div class="t" style="left:1493.20px;top:202px;line-height:20px;font-size:14.5px;color:#1a1a1a;letter-spacing:0.309px;">Colors:</div>
<div class="t" style="left:1588.20px;top:204px;line-height:20px;font-size:14.5px;color:#1a1a1a;">Extruder</div>
<div class="t" style="left:1763.00px;top:204px;line-height:20px;font-size:14.5px;color:#1a1a1a;letter-spacing:-0.047px;">Speed</div>
<div class="t" style="left:1502.60px;top:237px;line-height:20px;font-size:14.7px;color:#000;font-weight:bold;letter-spacing:0.343px;background:#fff;">Printing Statistics</div>
<div class="t" style="left:1501.60px;top:398px;line-height:20px;font-size:14.7px;color:#000;font-weight:bold;letter-spacing:0.499px;background:#fff;">Visualization</div>
<div class="t" style="left:1509.70px;top:264px;line-height:20px;font-size:14.5px;color:#1a1a1a;letter-spacing:0.081px;">Estimated Printing Time:</div>
<div class="t" style="left:1706.40px;top:264px;line-height:20px;font-size:14.5px;color:#1a1a1a;letter-spacing:0.112px;">10h:5m:45s</div>
<div class="t" style="left:1509.70px;top:284px;line-height:20px;font-size:14.5px;color:#1a1a1a;letter-spacing:-0.019px;">Layer Count:</div>
<div class="t" style="left:1706.40px;top:284px;line-height:20px;font-size:14.5px;color:#1a1a1a;letter-spacing:-0.468px;">971</div>
<div class="t" style="left:1509.70px;top:304px;line-height:20px;font-size:14.5px;color:#1a1a1a;letter-spacing:0.137px;">Total Lines:</div>
<div class="t" style="left:1706.40px;top:304px;line-height:20px;font-size:14.5px;color:#1a1a1a;letter-spacing:-0.122px;">1405518</div>
<div class="t" style="left:1509.70px;top:324px;line-height:20px;font-size:14.5px;color:#1a1a1a;letter-spacing:-0.059px;">Filament needed:</div>
<div class="t" style="left:1706.40px;top:324px;line-height:20px;font-size:14.5px;color:#1a1a1a;letter-spacing:0.111px;">63405 mm</div>
<div class="t" style="left:1509.70px;top:344px;line-height:20px;font-size:14.5px;color:#1a1a1a;letter-spacing:-0.161px;">Extruder 1</div>
<div class="t" style="left:1706.40px;top:344px;line-height:20px;font-size:14.5px;color:#1a1a1a;letter-spacing:0.111px;">63405 mm</div>
<div class="t" style="left:1528.70px;top:427px;line-height:20px;font-size:14.5px;color:#1a1a1a;letter-spacing:0.216px;">Show Travel Moves</div>
<div class="t" style="left:1528.00px;top:451px;line-height:20px;font-size:14.5px;color:#1a1a1a;letter-spacing:0.248px;">Show complete Code</div>
<div class="t" style="left:1528.70px;top:476px;line-height:20px;font-size:14.5px;color:#1a1a1a;letter-spacing:0.028px;">Show Single Layer</div>
<div class="t" style="left:1528.70px;top:501px;line-height:20px;font-size:14.5px;color:#1a1a1a;letter-spacing:0.054px;">Show Layer Range</div>
<div class="t" style="left:1509.80px;top:527px;line-height:20px;font-size:14.5px;color:#a3a3a3;letter-spacing:-0.026px;">First Layer:</div>
<div class="t" style="left:1509.80px;top:555px;line-height:20px;font-size:14.5px;color:#a3a3a3;letter-spacing:-0.086px;">Last Layer:</div>
<div class="t" style="left:1644.60px;top:528px;line-height:18px;font-size:12px;color:#9a9aa6;">0</div>
<div class="t" style="left:1644.60px;top:556px;line-height:18px;font-size:12px;color:#9a9aa6;">0</div>
<div class="t sx" style="left:7.20px;top:952px;line-height:18px;font-size:12.2px;color:#1a1a1a;transform:scaleX(0.8741);">Show in Log:</div>
<div class="t sx" style="left:103.50px;top:953px;line-height:18px;font-size:12.2px;color:#1a1a1a;transform:scaleX(0.8313);">Commands</div>
<div class="t sx" style="left:197.00px;top:953px;line-height:18px;font-size:12.2px;color:#1a1a1a;transform:scaleX(0.8322);">Infos</div>
<div class="t sx" style="left:260.50px;top:953px;line-height:18px;font-size:12.2px;color:#1a1a1a;transform:scaleX(0.8818);">Warnings</div>
<div class="t sx" style="left:346.50px;top:953px;line-height:18px;font-size:12.2px;color:#1a1a1a;transform:scaleX(0.8136);">Errors</div>
<div class="t sx" style="left:415.00px;top:953px;line-height:18px;font-size:12.2px;color:#1a1a1a;transform:scaleX(0.8579);">ACK</div>
<div class="t sx" style="left:477.00px;top:953px;line-height:18px;font-size:12.2px;color:#1a1a1a;transform:scaleX(0.8568);">Auto Scroll</div>
<div class="t sx" style="left:572.50px;top:953px;line-height:18px;font-size:12.2px;color:#1a1a1a;transform:scaleX(0.8513);">Clear Log</div>
<div class="t sx" style="left:662.50px;top:953px;line-height:18px;font-size:12.2px;color:#1a1a1a;transform:scaleX(0.8435);">Copy</div>
<div class="t" style="left:6.70px;top:974px;line-height:18px;font-size:12px;color:#fff;font-family:'Liberation Mono', monospace;letter-spacing:0.165px;">22:07:35.920</div>
<div class="t" style="left:6.70px;top:990px;line-height:18px;font-size:12px;color:#fff;font-family:'Liberation Mono', monospace;letter-spacing:0.165px;">22:07:35.920</div>
<div class="t" style="left:109.30px;top:974px;line-height:18px;font-size:12px;color:#1c16a8;font-family:'Liberation Mono', monospace;letter-spacing:0.213px;">OpenGL renderer:GeForce GTX 760/PCIe/SSE2</div>
<div class="t" style="left:109.30px;top:990px;line-height:18px;font-size:12px;color:#1c16a8;font-family:'Liberation Mono', monospace;letter-spacing:0.213px;">Using fast VBOs for rendering is possible</div>
<div class="t" style="left:4.60px;top:1021px;line-height:18px;font-size:12px;color:#1a1a1a;letter-spacing:-0.048px;">Disconnected: default</div>
<div class="t" style="left:890.60px;top:1021px;line-height:18px;font-size:12px;color:#1a1a1a;">-</div>
<div class="t" style="left:1666.00px;top:1021px;line-height:18px;font-size:12px;color:#1a1a1a;letter-spacing:-0.040px;">Idle</div>
</div>
</body></html>
